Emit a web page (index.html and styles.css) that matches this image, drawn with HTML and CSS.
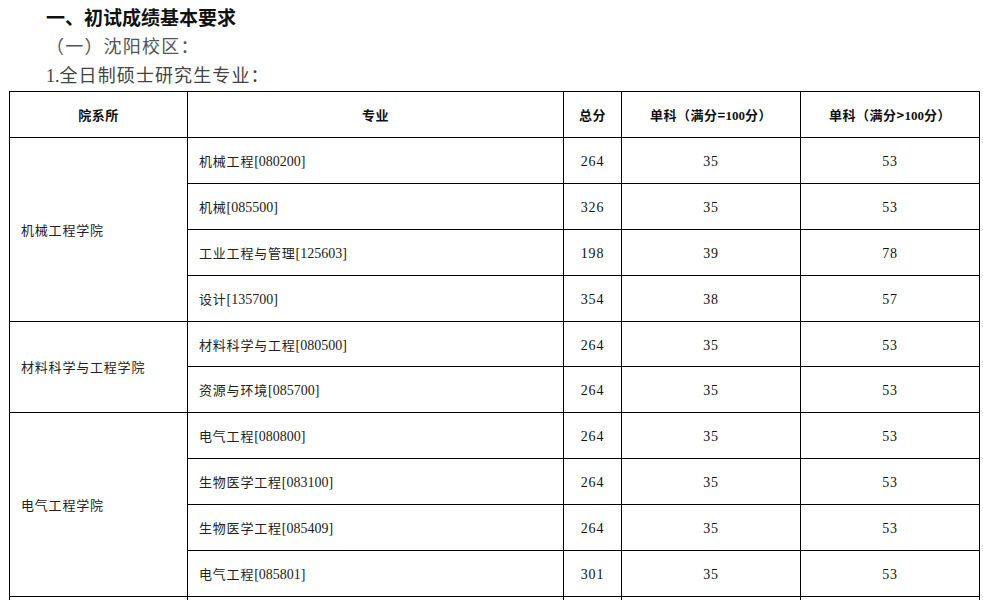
FILE: index.html
```html
<!DOCTYPE html>
<html lang="zh">
<head>
<meta charset="utf-8">
<link rel="stylesheet" href="styles.css">
</head>
<body>
<div class="intro">
  <h1 class="h1">一、初试成绩基本要求</h1>
  <p class="h2">（一）沈阳校区：</p>
  <p class="h3"><span class="num">1.</span>全日制硕士研究生专业：</p>
</div>
<table class="score">
  <colgroup>
    <col class="c1"><col class="c2"><col class="c3"><col class="c4"><col class="c5">
  </colgroup>
  <thead>
    <tr>
      <th>院系所</th>
      <th>专业</th>
      <th>总分</th>
      <th>单科（满分=<span class="num">100</span>分）</th>
      <th>单科（满分&gt;<span class="num">100</span>分）</th>
    </tr>
  </thead>
  <tbody>
    <tr><td rowspan="4" class="dept">机械工程学院</td><td class="major">机械工程<span class="num">[080200]</span></td><td class="num">264</td><td class="num">35</td><td class="num">53</td></tr>
    <tr><td class="major">机械<span class="num">[085500]</span></td><td class="num">326</td><td class="num">35</td><td class="num">53</td></tr>
    <tr><td class="major">工业工程与管理<span class="num">[125603]</span></td><td class="num">198</td><td class="num">39</td><td class="num">78</td></tr>
    <tr><td class="major">设计<span class="num">[135700]</span></td><td class="num">354</td><td class="num">38</td><td class="num">57</td></tr>
    <tr><td rowspan="2" class="dept">材料科学与工程学院</td><td class="major">材料科学与工程<span class="num">[080500]</span></td><td class="num">264</td><td class="num">35</td><td class="num">53</td></tr>
    <tr><td class="major">资源与环境<span class="num">[085700]</span></td><td class="num">264</td><td class="num">35</td><td class="num">53</td></tr>
    <tr><td rowspan="4" class="dept">电气工程学院</td><td class="major">电气工程<span class="num">[080800]</span></td><td class="num">264</td><td class="num">35</td><td class="num">53</td></tr>
    <tr><td class="major">生物医学工程<span class="num">[083100]</span></td><td class="num">264</td><td class="num">35</td><td class="num">53</td></tr>
    <tr><td class="major">生物医学工程<span class="num">[085409]</span></td><td class="num">264</td><td class="num">35</td><td class="num">53</td></tr>
    <tr><td class="major">电气工程<span class="num">[085801]</span></td><td class="num">301</td><td class="num">35</td><td class="num">53</td></tr>
    <tr><td class="dept"></td><td class="major"></td><td></td><td></td><td></td></tr>
  </tbody>
</table>
</body>
</html>
```
FILE: styles.css
```css
html, body {
  margin: 0;
  padding: 0;
  background: #fff;
}
body {
  padding: 0 0 0 9px;
  font-family: "Noto Sans CJK SC", "Liberation Serif", serif;
  color: #000;
}
.num {
  font-family: "Liberation Serif", serif;
  letter-spacing: 0;
}
.intro {
  padding-left: 37px;
  padding-top: 3px;
}
.h1 {
  margin: 0;
  font-size: 19px;
  font-weight: bold;
  line-height: 28px;
  color: #111;
}
.h2 {
  margin: 0;
  font-size: 18px;
  line-height: 29px;
  font-weight: normal;
  letter-spacing: 1.2px;
  color: #555;
}
.h3 {
  margin: 0;
  font-size: 18px;
  line-height: 28px;
  letter-spacing: 1.1px;
  color: #444;
}
.h3 .num {
  font-size: 18px;
}
.score {
  margin-top: 1px;
  border-collapse: collapse;
  width: 971px;
  table-layout: fixed;
}
.c1 { width: 178px; }
.c2 { width: 376px; }
.c3 { width: 58px; }
.c4 { width: 179px; }
.c5 { width: 179px; }
.score th, .score td {
  border: 1.5px solid #000;
  height: 44.9px;
  padding: 0;
  text-align: center;
  vertical-align: middle;
  font-size: 13px;
  letter-spacing: 0.8px;
  color: #111;
}
.score th {
  font-weight: bold;
  height: 45px;
  letter-spacing: 0.5px;
}
.score td.num {
  font-size: 14px;
  padding-top: 3px;
  height: 41.9px;
}
.score td.dept {
  text-align: left;
  padding-left: 11px;
  color: #222;
}
.score td.major {
  text-align: left;
  padding-left: 11px;
  color: #222;
}
.major .num {
  font-size: 14px;
}
```
